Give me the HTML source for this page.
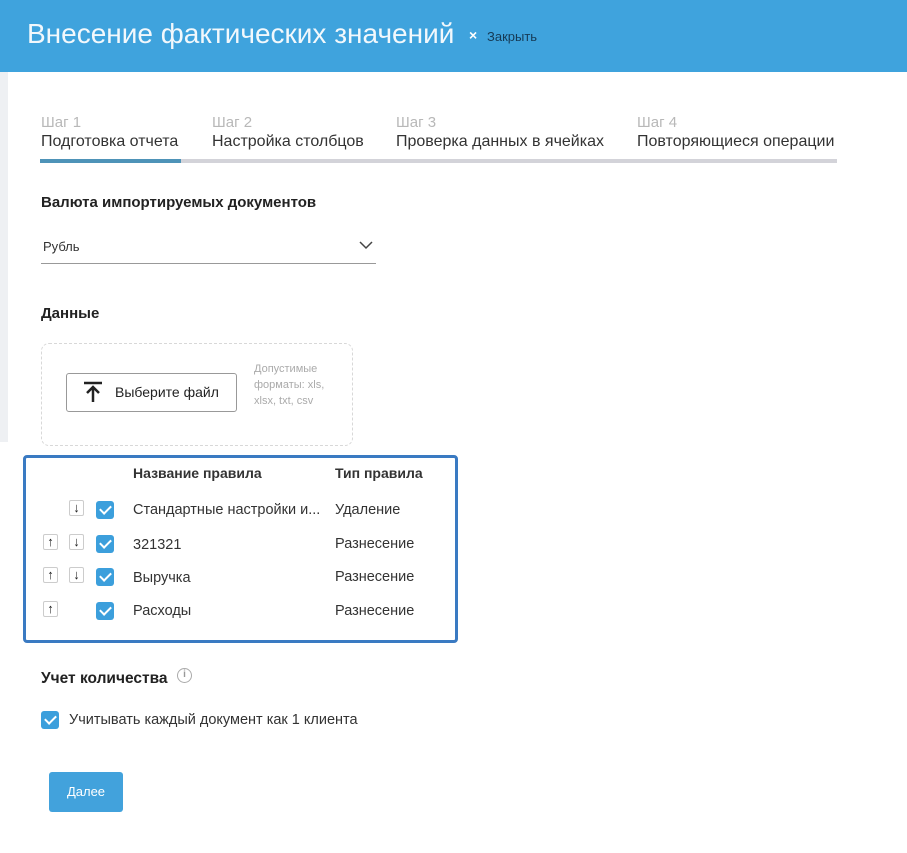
<!DOCTYPE html>
<html><head><meta charset="utf-8"><style>
*{margin:0;padding:0;box-sizing:border-box}
body{width:907px;height:853px;background:#fff;font-family:"Liberation Sans","Noto Sans CJK SC",sans-serif;color:#333;position:relative;overflow:hidden}
.a{position:absolute;white-space:nowrap}
.hdr{position:absolute;left:0;top:0;width:907px;height:72px;background:#3fa3dd}
.cb{position:absolute;width:18px;height:18px;background:#3c9fdc;border-radius:3px}
.cb:after{content:"";position:absolute;left:6px;top:2px;width:5px;height:9px;border:solid #fff;border-width:0 2px 2px 0;transform:rotate(45deg)}
.ar{position:absolute;width:15px;height:16px;border:1px solid #ccc;border-radius:2px;font-size:13px;line-height:14px;text-align:center;color:#222;font-weight:bold}
.t{font-size:14.5px;color:#333}
.s{font-size:16px;color:#333}
.g{font-size:15px;color:#b8b8b8}
</style></head><body>
<div class="hdr"></div>
<div class="a" style="left:27px;top:18px;font-size:28px;color:#f2f8fc">Внесение фактических значений</div>
<div class="a" style="left:469px;top:27px;font-size:14px;color:#fff;font-weight:bold">×</div>
<div class="a" style="left:487px;top:29px;font-size:13px;color:#163a55">Закрыть</div>
<div class="a" style="left:0;top:72px;width:8px;height:370px;background:#eef0f3"></div>

<div class="a g" style="left:41px;top:114px">Шаг 1</div>
<div class="a s" style="left:41px;top:133px">Подготовка отчета</div>
<div class="a g" style="left:212px;top:114px">Шаг 2</div>
<div class="a s" style="left:212px;top:133px">Настройка столбцов</div>
<div class="a g" style="left:396px;top:114px">Шаг 3</div>
<div class="a s" style="left:396px;top:133px">Проверка данных в ячейках</div>
<div class="a g" style="left:637px;top:114px">Шаг 4</div>
<div class="a s" style="left:637px;top:133px">Повторяющиеся операции</div>
<div class="a" style="left:40px;top:159px;width:797px;height:4px;background:#d3d3d9"></div>
<div class="a" style="left:40px;top:159px;width:141px;height:4px;background:#4e93b8"></div>

<div class="a" style="left:41px;top:194px;font-size:15px;font-weight:bold;color:#222">Валюта импортируемых документов</div>
<div class="a t" style="left:43px;top:239px;font-size:13px">Рубль</div>
<svg class="a" style="left:359px;top:241px" width="14" height="9"><path d="M1 1l6 6 6-6" fill="none" stroke="#444" stroke-width="1.5"/></svg>
<div class="a" style="left:41px;top:263px;width:335px;height:1px;background:#999"></div>

<div class="a" style="left:41px;top:305px;font-size:15px;font-weight:bold;color:#222">Данные</div>
<div class="a" style="left:41px;top:343px;width:312px;height:103px;border:1px dashed #d8d8d8;border-radius:8px"></div>
<div class="a" style="left:66px;top:373px;width:171px;height:39px;border:1px solid #999;border-radius:3px"></div>
<svg class="a" style="left:82px;top:381px" width="22" height="22"><path d="M2 2h18M11 21V6M5 12l6-6 6 6" fill="none" stroke="#222" stroke-width="2.5"/></svg>
<div class="a" style="left:115px;top:384px;font-size:14px;color:#222">Выберите файл</div>
<div class="a" style="left:254px;top:361px;font-size:11px;line-height:16px;color:#aaa;white-space:normal;width:78px">Допустимые форматы: xls, xlsx, txt, csv</div>

<div class="a" style="left:23px;top:455px;width:435px;height:188px;border:3px solid #3a7ac2;border-radius:4px"></div>
<div class="a" style="left:133px;top:465px;font-size:14px;font-weight:bold;color:#333">Название правила</div>
<div class="a" style="left:335px;top:465px;font-size:14px;font-weight:bold;color:#333">Тип правила</div>

<div class="ar" style="left:69px;top:500px">↓</div>
<div class="cb" style="left:96px;top:501px"></div>
<div class="a t" style="left:133px;top:502px">Стандартные настройки и...</div>
<div class="a t" style="left:335px;top:502px">Удаление</div>

<div class="ar" style="left:43px;top:534px">↑</div><div class="ar" style="left:69px;top:534px">↓</div>
<div class="cb" style="left:96px;top:535px"></div>
<div class="a t" style="left:133px;top:537px">321321</div>
<div class="a t" style="left:335px;top:536px">Разнесение</div>

<div class="ar" style="left:43px;top:567px">↑</div><div class="ar" style="left:69px;top:567px">↓</div>
<div class="cb" style="left:96px;top:568px"></div>
<div class="a t" style="left:133px;top:570px">Выручка</div>
<div class="a t" style="left:335px;top:569px">Разнесение</div>

<div class="ar" style="left:43px;top:601px">↑</div>
<div class="cb" style="left:96px;top:602px"></div>
<div class="a t" style="left:133px;top:603px">Расходы</div>
<div class="a t" style="left:335px;top:603px">Разнесение</div>

<div class="a" style="left:41px;top:670px;font-size:15.5px;font-weight:bold;color:#222">Учет количества</div>
<div class="a" style="left:177px;top:668px;width:15px;height:15px;border:1.5px solid #aaa;border-radius:50%;font-size:10px;line-height:12px;text-align:center;color:#999;font-weight:bold">i</div>
<div class="cb" style="left:41px;top:711px"></div>
<div class="a t" style="left:69px;top:712px;font-size:14.5px">Учитывать каждый документ как 1 клиента</div>

<div class="a" style="left:49px;top:772px;width:74px;height:40px;background:#42a2dc;border-radius:3px;color:#fff;font-size:13px;line-height:40px;text-align:center">Далее</div>
</body></html>
